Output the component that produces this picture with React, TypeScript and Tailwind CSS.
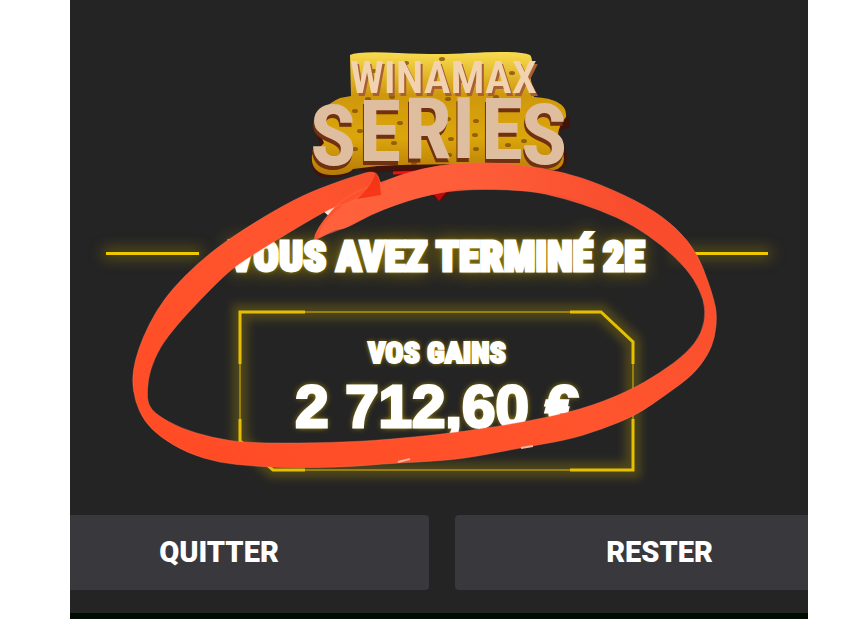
type Point = [number, number];

const ringOuter: Point[] = [
  [381, 194], [381, 182], [375, 170], [355, 176], [337, 182], [303, 195], [263, 217], [223, 243], [197, 264],
  [173, 288], [156, 311], [143, 337], [135, 360], [132, 380], [135, 401], [144, 421], [160, 437],
  [187, 453], [220, 463], [253, 466], [287, 468], [347, 467], [397, 463], [420, 462], [463, 459],
  [520, 448], [567, 440], [600, 430], [637, 415], [667, 394], [693, 375], [708, 355], [715, 337],
  [717, 315], [714, 300], [708, 281], [697, 253], [677, 228], [647, 206], [600, 184], [563, 172],
  [523, 165], [480, 162], [440, 165], [407, 173], [370, 186], [345, 197], [330, 212], [318, 228], [313, 240],
];

const ringInner: Point[] = [
  [320, 238], [335, 229], [345, 229], [370, 215], [400, 203], [420, 197], [460, 189], [527, 190], [563, 198],
  [600, 210], [633, 225], [663, 246], [687, 269], [700, 290], [706, 310], [702, 333], [687, 353],
  [660, 373], [627, 392], [580, 410], [520, 423], [453, 433], [403, 438], [367, 441], [317, 443],
  [247, 443], [213, 438], [180, 428], [157, 415], [148, 405], [147, 390], [150, 370], [160, 347],
  [177, 325], [200, 300], [223, 277], [237, 265], [270, 244], [310, 220], [337, 205], [370, 198],
];

const cheeseHoles: Point[] = [
  [66, 20], [98, 12], [134, 8], [170, 14], [84, 46], [110, 34], [140, 48], [92, 72], [86, 92], [47, 98],
  [47, 60], [52, 80], [140, 68], [143, 88], [141, 104], [106, 112], [168, 70], [167, 84], [168, 98],
  [188, 46], [205, 75], [208, 104], [200, 94], [216, 90], [60, 48], [152, 30], [204, 22],
];

// Joins the points with quadratic curves through their midpoints
function smoothPath(points: Point[]): string {
  const mid = (a: Point, b: Point) => `${(a[0] + b[0]) / 2} ${(a[1] + b[1]) / 2}`;
  const last = points.length - 1;
  let d = `M${mid(points[last], points[0])}`;
  points.forEach((p, i) => {
    d += `Q${p[0]} ${p[1]} ${mid(p, points[(i + 1) % points.length])}`;
  });
  return d + 'Z';
}

function Logo() {
  return (
    <svg className="h-[150px] w-[262px]" viewBox="0 0 262 150" role="img" aria-label="Winamax Series">
      <defs>
        <linearGradient id="cheese" x1="0" y1="0" x2="0" y2="1">
          <stop offset="0" stopColor="#f9dc50" />
          <stop offset="0.35" stopColor="#cf980c" />
          <stop offset="0.7" stopColor="#dba60b" />
          <stop offset="1" stopColor="#b47a08" />
        </linearGradient>
      </defs>
      <path d="M80 118L180 112L132 150Z" fill="#5c0808" />
      <path d="M85 122L170 119" stroke="#f01212" strokeWidth="3" />
      <path d="M42 46L32 48Q2 60 12 96L3 106Q2 128 22 127Q40 127 48 117L62 122L120 117L190 118L248 121Q264 116 257 96L250 80L263 76V68L230 46Z" fill="#40140b" />
      <path d="M42 4Q50 0 90 2Q135 4 160 2Q210 -1 222 4Q226 8 222 24L226 46Q260 48 258 66Q246 80 252 94Q262 116 246 119L190 114Q120 112 70 115L45 118Q40 124 22 124Q2 122 4 104L16 92Q2 60 32 47L43 45Z" fill="url(#cheese)" />
      {cheeseHoles.map(([x, y]) => (
        <ellipse key={`${x}-${y}`} cx={x} cy={y} rx="3" ry="2" fill="#7d4905" opacity="0.75" />
      ))}
      <g className="font-['Roboto_Condensed','Roboto',sans-serif] font-bold">
        <text x="42" y="42" fontSize="45" fill="#f1d3b0" className="font-semibold drop-shadow-[2px_3px_0_#a85f33]">
          WINAMAX
        </text>
        <text
          x="2 51 96 144 173 213"
          y="114 110 107 107 108 113"
          fontSize="86"
          fill="#dfbd9f"
          className="drop-shadow-[-1px_4px_0_#71300f]"
        >
          SERIES
        </text>
      </g>
    </svg>
  );
}

function NeonLine() {
  return <span className="h-[3px] w-[93px] bg-[#f0c800] shadow-[0_0_14px_3px_#a8900080]" />;
}

function GainsFrame() {
  return (
    <svg className="absolute inset-0 h-full w-full overflow-visible" viewBox="0 0 396 160" fill="none" aria-hidden="true">
      <g className="blur-[4px]" opacity="0.25">
        <path d="M1 1H362L394 31V159H34L1 130Z" stroke="#c7a800" strokeWidth="16" />
      </g>
      <path d="M1 1H362L394 31V159H34L1 130Z" stroke="#99800c" strokeWidth="2" />
      <path d="M1 53V1H66M331 1H362L394 31V53M394 108V159H331M66 159H34L1 130V108" stroke="#e6bf00" strokeWidth="3" />
    </svg>
  );
}

function MarkerRing() {
  return (
    <svg className="pointer-events-none absolute top-0 left-1/2 h-[619px] w-[738px] -translate-x-1/2" viewBox="70 0 738 619" aria-hidden="true">
      <defs>
        <linearGradient id="marker" x1="0" y1="1" x2="1" y2="0">
          <stop offset="0" stopColor="#ff4a24" />
          <stop offset="0.5" stopColor="#ff552e" />
          <stop offset="1" stopColor="#f5482b" />
        </linearGradient>
        <linearGradient id="highlight" x1="0" y1="0" x2="1" y2="0">
          <stop offset="0" stopColor="#ff6844" />
          <stop offset="0.5" stopColor="#ff633d" />
          <stop offset="1" stopColor="#ff633d" stopOpacity="0" />
        </linearGradient>
      </defs>
      <path d="M322 210L342 202L331 218Z" fill="#f6e4dc" />
      <path d="M430 190H448L439 201Z" fill="#b80d0d" />
      <path d={smoothPath([...ringOuter, ...ringInner])} fill="url(#marker)" stroke="#ff8065" strokeOpacity="0.35" />
      <path d="M381 184Q394 176 407 173Q440 162 482 163Q530 164 572 176Q600 185 640 205L645 228Q600 205 563 196Q525 188 460 189Q420 195 370 215L345 228L318 238Q320 222 345 204Z" fill="url(#highlight)" opacity="0.7" />
      <path d="M376 172L380 183L381 195L357 199Q371 188 376 172Z" fill="#f52d10" opacity="0.8" />
      <path d="M398 462L410 459M521 448L533 446" stroke="#f5b6a5" strokeWidth="2" />
    </svg>
  );
}

export default function App() {
  return (
    <div className="min-h-screen bg-white pr-[49px] pl-[70px]">
      <main className="relative flex min-h-screen flex-col items-center overflow-hidden bg-[#242424] text-white">
        <div className="pt-[51px]">
          <Logo />
        </div>
        <div className="mt-6 mr-1 flex items-center justify-center gap-[30px]">
          <NeonLine />
          <h1 className="pt-2 font-['Roboto_Condensed','Roboto',sans-serif] text-[42px] leading-[48px] font-black whitespace-nowrap [-webkit-text-stroke:3px_white] [text-shadow:0_0_4px_#e0ba00,0_0_18px_#b89c00]">
            VOUS AVEZ TERMINÉ 2E
          </h1>
          <NeonLine />
        </div>
        <section className="relative mt-[30px] mr-1 flex h-[160px] w-full max-w-[396px] flex-col items-center pt-6">
          <GainsFrame />
          <h2 className="relative font-['Roboto_Condensed','Roboto',sans-serif] text-[30px] leading-9 font-black [-webkit-text-stroke:2px_white] [text-shadow:0_0_5px_#e8c000]">
            VOS GAINS
          </h2>
          <p className="relative font-['Liberation_Sans',sans-serif] text-[60px] leading-[72px] font-bold whitespace-nowrap [-webkit-text-stroke:3px_white] [text-shadow:0_0_6px_#e8c000]">
            2 712,60 €
          </p>
        </section>
        <div className="mt-11 -mr-[56px] -ml-[61px] grid grid-cols-[420fr_409fr] gap-[26px] self-stretch font-['Roboto',sans-serif] text-[29px] font-black">
          <button type="button" className="h-[75px] cursor-pointer rounded-sm bg-[#38383d]">QUITTER</button>
          <button type="button" className="h-[75px] cursor-pointer rounded-sm bg-[#38383d]">RESTER</button>
        </div>
        <div className="mt-auto h-[6px] w-full bg-[#000b02]" />
        <MarkerRing />
      </main>
    </div>
  );
}
